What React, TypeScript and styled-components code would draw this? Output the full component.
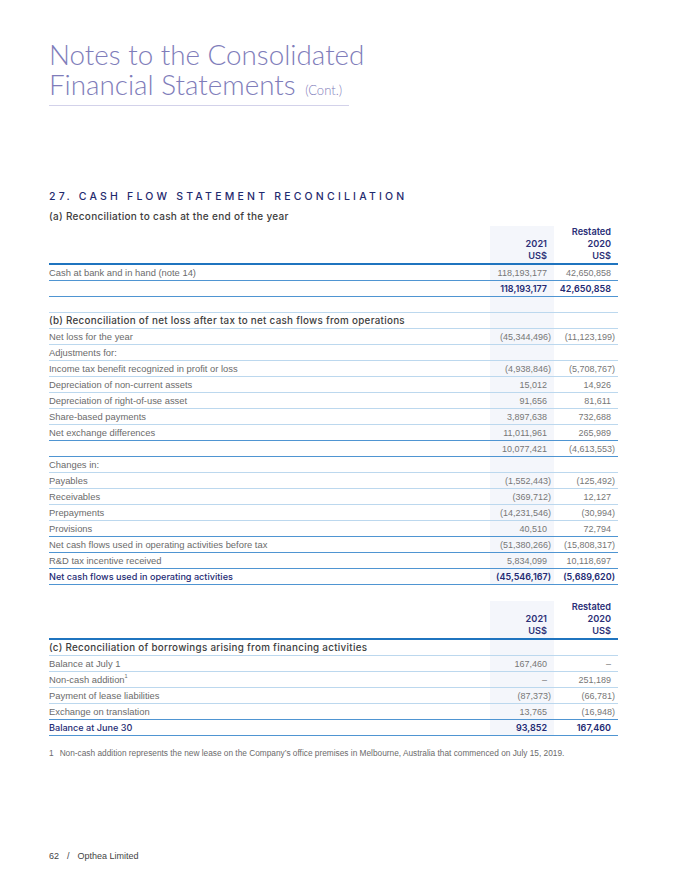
import React from "react";
import styled, { createGlobalStyle } from "styled-components";

const Global = createGlobalStyle`
  html, body { margin: 0; padding: 0; background: #ffffff; }
  body { font-family: "Liberation Sans", Arial, sans-serif; }
  * { box-sizing: border-box; }
`;

const Page = styled.div`
  width: 676px;
  height: 891px;
  padding: 0 58px 0 49px;
  display: flex;
  flex-direction: column;
  position: relative;
`;

const TitleBlock = styled.header`
  margin-top: 40px;
  width: 300px;
  border-bottom: 1px solid #d3d2ea;
  padding-bottom: 5px;
`;

const Title = styled.h1`
  margin: 0;
  font-family: Lato, "Liberation Sans", sans-serif;
  font-weight: 300;
  font-size: 27.8px;
  line-height: 30px;
  color: #7f7dba;
  white-space: nowrap;
`;

const Cont = styled.span`
  font-size: 13px;
  line-height: 1;
  margin-left: 2px;
`;

const SectionTitle = styled.h2`
  margin: 84px 0 0 0;
  font-family: Inter, "Liberation Sans", sans-serif;
  font-weight: 500;
  font-size: 10.5px;
  line-height: 14px;
  letter-spacing: 3.2px;
  color: #1f2a6e;
  white-space: nowrap;
`;

const SubTitle = styled.h3`
  margin: 6px 0 0 0;
  font-family: Inter, "Liberation Sans", sans-serif;
  font-weight: 500;
  font-size: 10px;
  line-height: 12px;
  letter-spacing: 0.3px;
  color: #3d3d3d;
  white-space: nowrap;
`;

const Table = styled.div<{ $mt: number }>`
  margin-top: ${(p) => p.$mt}px;
  width: 569px;
  display: grid;
  grid-template-columns: 441px 64px 64px;
`;

type Border = "none" | "light" | "mid" | "thick";

const borderCss = (b: Border) =>
  b === "none"
    ? "border-bottom: 1px solid transparent;"
    : b === "light"
    ? "border-bottom: 1px solid #bcd8ee;"
    : b === "mid"
    ? "border-bottom: 1px solid #4f95d2;"
    : "border-bottom: 2px solid #1f74bf;";

const Cell = styled.div<{ $b: Border; $shade?: boolean; $h?: number }>`
  height: ${(p) => p.$h ?? 16}px;
  ${(p) => borderCss(p.$b)}
  background: ${(p) => (p.$shade ? "#f4f6fb" : "transparent")};
  display: flex;
  align-items: center;
  font-size: 9.4px;
  color: #6b6b6b;
  white-space: nowrap;
`;

const LabelCell = styled(Cell)<{ $kind?: "normal" | "heading" | "total" }>`
  font-family: ${(p) =>
    p.$kind === "heading" || p.$kind === "total"
      ? 'Inter, "Liberation Sans", sans-serif'
      : '"Liberation Sans", Arial, sans-serif'};
  font-weight: ${(p) => (p.$kind === "heading" || p.$kind === "total" ? 500 : 400)};
  font-size: ${(p) => (p.$kind === "heading" ? "9.8px" : p.$kind === "total" ? "9.1px" : "9.4px")};
  letter-spacing: ${(p) => (p.$kind === "heading" ? "0.3px" : "0")};
  color: ${(p) =>
    p.$kind === "heading" ? "#3d3d3d" : p.$kind === "total" ? "#232a73" : "#6b6b6b"};
`;

const NumCell = styled(Cell)<{ $total?: boolean }>`
  justify-content: flex-end;
  padding-right: 3px;
  font-family: ${(p) => (p.$total ? 'Inter, "Liberation Sans", sans-serif' : '"Liberation Sans", Arial, sans-serif')};
  font-weight: ${(p) => (p.$total ? 600 : 400)};
  font-size: 9px;
  color: ${(p) => (p.$total ? "#232a73" : "#777777")};
`;

const Num = styled.span<{ $neg: boolean }>`
  padding-right: ${(p) => (p.$neg ? 0 : 4)}px;
`;

const HeadCell = styled.div<{ $shade?: boolean }>`
  height: 39px;
  border-bottom: 2px solid #1f74bf;
  background: ${(p) => (p.$shade ? "#f4f6fb" : "transparent")};
  display: flex;
  flex-direction: column;
  justify-content: flex-end;
  align-items: flex-end;
  padding: 0 7px 1px 0;
  font-family: Inter, "Liberation Sans", sans-serif;
  font-weight: 600;
  font-size: 9.2px;
  line-height: 12px;
  color: #2b2f77;
`;

const Sup = styled.sup`
  font-size: 5.5px;
  vertical-align: top;
  position: relative;
  top: -1px;
`;

const FootNote = styled.p`
  margin: 12px 0 0 0;
  display: flex;
  gap: 6px;
  font-size: 8.3px;
  color: #6b6b6b;
  white-space: nowrap;
`;

const Footer = styled.footer`
  margin-top: auto;
  margin-bottom: 30px;
  display: flex;
  gap: 8px;
  font-size: 9px;
  color: #444;
`;

type Row = {
  label: React.ReactNode;
  a?: string;
  b?: string;
  border: Border;
  kind?: "normal" | "heading" | "total";
};

const fmt = (v?: string) => {
  if (!v) return null;
  const neg = v.startsWith("(");
  return <Num $neg={neg}>{v}</Num>;
};

const Rows: React.FC<{ rows: Row[] }> = ({ rows }) => (
  <>
    {rows.map((r, i) => (
      <React.Fragment key={i}>
        <LabelCell $b={r.border} $kind={r.kind ?? "normal"}>
          {r.label}
        </LabelCell>
        <NumCell $b={r.border} $shade $total={r.kind === "total"}>
          {fmt(r.a)}
        </NumCell>
        <NumCell $b={r.border} $total={r.kind === "total"}>
          {fmt(r.b)}
        </NumCell>
      </React.Fragment>
    ))}
  </>
);

const Head: React.FC = () => (
  <>
    <HeadCell />
    <HeadCell $shade>
      <span>2021</span>
      <span>US$</span>
    </HeadCell>
    <HeadCell>
      <span>Restated</span>
      <span>2020</span>
      <span>US$</span>
    </HeadCell>
  </>
);

const rowsAB: Row[] = [
  { label: "Cash at bank and in hand (note 14)", a: "118,193,177", b: "42,650,858", border: "mid" },
  { label: "", a: "118,193,177", b: "42,650,858", border: "mid", kind: "total" },
  { label: "", border: "light" },
  {
    label: "(b)  Reconciliation of net loss after tax to net cash flows from operations",
    border: "light",
    kind: "heading",
  },
  { label: "Net loss for the year", a: "(45,344,496)", b: "(11,123,199)", border: "light" },
  { label: "Adjustments for:", border: "light" },
  { label: "Income tax benefit recognized in profit or loss", a: "(4,938,846)", b: "(5,708,767)", border: "light" },
  { label: "Depreciation of non-current assets", a: "15,012", b: "14,926", border: "light" },
  { label: "Depreciation of right-of-use asset", a: "91,656", b: "81,611", border: "light" },
  { label: "Share-based payments", a: "3,897,638", b: "732,688", border: "light" },
  { label: "Net exchange differences", a: "11,011,961", b: "265,989", border: "mid" },
  { label: "", a: "10,077,421", b: "(4,613,553)", border: "mid" },
  { label: "Changes in:", border: "light" },
  { label: "Payables", a: "(1,552,443)", b: "(125,492)", border: "light" },
  { label: "Receivables", a: "(369,712)", b: "12,127", border: "light" },
  { label: "Prepayments", a: "(14,231,546)", b: "(30,994)", border: "light" },
  { label: "Provisions", a: "40,510", b: "72,794", border: "mid" },
  { label: "Net cash flows used in operating activities before tax", a: "(51,380,266)", b: "(15,808,317)", border: "mid" },
  { label: "R&D tax incentive received", a: "5,834,099", b: "10,118,697", border: "mid" },
  { label: "Net cash flows used in operating activities", a: "(45,546,167)", b: "(5,689,620)", border: "mid", kind: "total" },
];

const rowsC: Row[] = [
  { label: "(c) Reconciliation of borrowings arising from financing activities", border: "light", kind: "heading" },
  { label: "Balance at July 1", a: "167,460", b: "–", border: "light" },
  {
    label: (
      <span>
        Non-cash addition<Sup>1</Sup>
      </span>
    ),
    a: "–",
    b: "251,189",
    border: "light",
  },
  { label: "Payment of lease liabilities", a: "(87,373)", b: "(66,781)", border: "light" },
  { label: "Exchange on translation", a: "13,765", b: "(16,948)", border: "mid" },
  { label: "Balance at June 30", a: "93,852", b: "167,460", border: "mid", kind: "total" },
];

export default function App() {
  return (
    <Page>
      <Global />
      <TitleBlock>
        <Title>Notes to the Consolidated</Title>
        <Title>
          Financial Statements <Cont>(Cont.)</Cont>
        </Title>
      </TitleBlock>
      <SectionTitle>27. CASH FLOW STATEMENT RECONCILIATION</SectionTitle>
      <SubTitle>(a)  Reconciliation to cash at the end of the year</SubTitle>
      <Table $mt={4}>
        <Head />
        <Rows rows={rowsAB} />
      </Table>
      <Table $mt={16}>
        <Head />
        <Rows rows={rowsC} />
      </Table>
      <FootNote>
        <span>1</span>
        <span>
          Non-cash addition represents the new lease on the Company’s office premises in Melbourne, Australia that
          commenced on July 15, 2019.
        </span>
      </FootNote>
      <Footer>
        <span>62</span>
        <span>/</span>
        <span>Opthea Limited</span>
      </Footer>
    </Page>
  );
}
